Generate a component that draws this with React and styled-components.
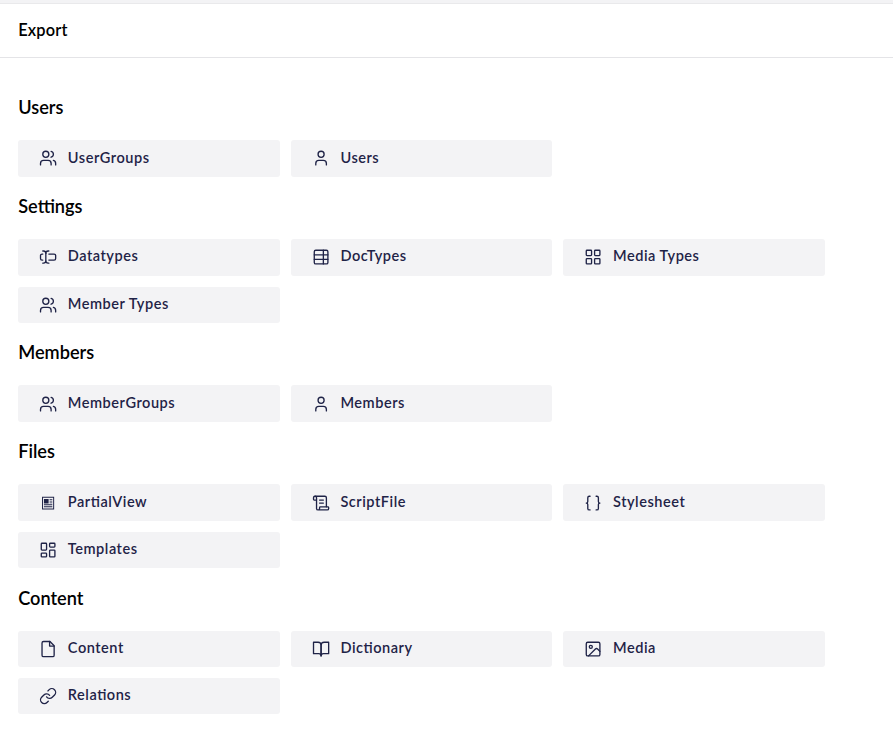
import React from "react";
import styled, { createGlobalStyle } from "styled-components";
import {
  Users,
  User,
  TableProperties,
  LayoutGrid,
  LayoutDashboard,
  ScrollText,
  Braces,
  Link,
} from "lucide-react";

const GlobalStyle = createGlobalStyle`
  body {
    margin: 0;
    background: #fff;
    font-family: Lato, "Liberation Sans", sans-serif;
    color: #000;
  }
`;

const Page = styled.div`
  box-sizing: border-box;
  height: 730px;
  overflow: hidden;
  border-top: 3px solid #f3f3f5;
`;

const Header = styled.header`
  box-sizing: border-box;
  height: 55px;
  padding: 0 18.2px 2px;
  display: flex;
  align-items: center;
  border-top: 1px solid #e9e9eb;
  border-bottom: 1px solid #e4e4e7;
`;

const Title = styled.h1`
  margin: 0;
  font-size: 16.36px;
  line-height: 22px;
  font-weight: 600;
  letter-spacing: 0.2px;
`;

const Main = styled.main`
  padding: 33.3px 18.2px 0;
`;

const Section = styled.section`
  margin-bottom: 13.6px;
`;

const Heading = styled.h2`
  margin: 0;
  padding-bottom: 16px;
  font-size: 18.18px;
  line-height: 33px;
  font-weight: 600;
`;

const Grid = styled.div`
  display: grid;
  grid-template-columns: repeat(3, 261.7px);
  grid-auto-rows: 36.36px;
  gap: 10.91px;
`;

const Button = styled.button`
  box-sizing: border-box;
  border: 0;
  border-radius: 3px;
  padding: 0 20.9px;
  display: flex;
  align-items: center;
  gap: 10.6px;
  background: #f3f3f5;
  color: #1f2347;
  font: 600 14.55px/22px Lato, "Liberation Sans", sans-serif;
  cursor: pointer;

  svg {
    flex: none;
    width: 18.18px;
    height: 18.18px;
    margin-top: 0.2px;
    stroke-width: 1.75;
  }
`;

const Label = styled.span`
  padding-bottom: 1.92px;
  letter-spacing: 0.52px;
  font-feature-settings: "liga" 1;
`;

const Outline = ({ children }) => (
  <svg
    viewBox="0 0 24 24"
    fill="none"
    stroke="currentColor"
    strokeLinecap="round"
    strokeLinejoin="round"
  >
    {children}
  </svg>
);

const CursorIcon = () => (
  <Outline>
    <path d="M5 4h1a3 3 0 0 1 3 3 3 3 0 0 1 3-3h1" />
    <path d="M13 20h-1a3 3 0 0 1-3-3 3 3 0 0 1-3 3H5" />
    <path d="M5 16H4a2 2 0 0 1-2-2v-4a2 2 0 0 1 2-2h1" />
    <path d="M13 8h7a2 2 0 0 1 2 2v4a2 2 0 0 1-2 2h-7" />
    <path d="M9 7v10" />
  </Outline>
);

const PageIcon = () => (
  <Outline>
    <path d="M14.5 2H6a2 2 0 0 0-2 2v16a2 2 0 0 0 2 2h12a2 2 0 0 0 2-2V7.500z" />
    <path d="M14 2v6h6" />
  </Outline>
);

const BookIcon = () => (
  <Outline>
    <path d="M2 3h6a4 4 0 0 1 4 4v14a3 3 0 0 0-3-3H2z" />
    <path d="M22 3h-6a4 4 0 0 0-4 4v14a3 3 0 0 1 3-3h7z" />
  </Outline>
);

const PictureIcon = () => (
  <Outline>
    <rect x="3" y="3" width="18" height="18" rx="2" />
    <circle cx="9" cy="9" r="2" />
    <path d="m21 15-3.086-3.086a2 2 0 0 0-2.828 0L6 21" />
  </Outline>
);

const ArticleIcon = () => (
  <svg viewBox="0 0 24 24" fill="currentColor">
    <path fillRule="evenodd" d="M4 3.500h16v17H4zM5.300 4.800v14.400h13.400V4.800z" />
    <path d="M6.500 6.500h6.200v6H6.500zM14 6.500h3.600v1.100H14zM14 8.800h3.600v1.100H14zM14 11.200h3.600v1.100H14zM6.500 13.700h11.100v1.200H6.500zM6.500 16.200h11.100v1.200H6.500z" />
  </svg>
);

const sections = [
  ["Users", [["UserGroups", Users], ["Users", User]]],
  [
    "Settings",
    [
      ["Datatypes", CursorIcon],
      ["DocTypes", TableProperties],
      ["Media Types", LayoutGrid],
      ["Member Types", Users],
    ],
  ],
  ["Members", [["MemberGroups", Users], ["Members", User]]],
  [
    "Files",
    [
      ["PartialView", ArticleIcon],
      ["ScriptFile", ScrollText],
      ["Stylesheet", Braces],
      ["Templates", LayoutDashboard],
    ],
  ],
  [
    "Content",
    [
      ["Content", PageIcon],
      ["Dictionary", BookIcon],
      ["Media", PictureIcon],
      ["Relations", Link],
    ],
  ],
];

export default function App() {
  return (
    <>
      <GlobalStyle />
      <Page>
        <Header>
          <Title>Export</Title>
        </Header>
        <Main>
          {sections.map(([name, items]) => (
            <Section key={name}>
              <Heading>{name}</Heading>
              <Grid>
                {items.map(([label, Icon]) => (
                  <Button key={label}>
                    <Icon />
                    <Label>{label}</Label>
                  </Button>
                ))}
              </Grid>
            </Section>
          ))}
        </Main>
      </Page>
    </>
  );
}
